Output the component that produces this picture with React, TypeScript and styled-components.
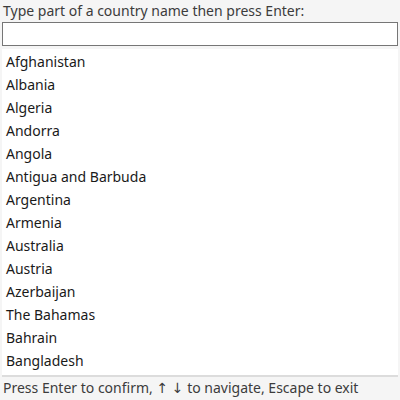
import React from "react";
import styled, { createGlobalStyle } from "styled-components";

const Global = createGlobalStyle`
  html, body { margin: 0; padding: 0; background: #f5f5f5; }
  body { font-family: "Noto Sans", "DejaVu Sans", sans-serif; }
`;

const Page = styled.div`
  width: 400px;
  height: 400px;
  display: flex;
  flex-direction: column;
  background: #f5f5f5;
  overflow: hidden;
`;

const Prompt = styled.div`
  height: 22px;
  padding-left: 3px;
  font-size: 14px;
  line-height: 22px;
  color: #3c3c3c;
  white-space: nowrap;
`;

const Input = styled.input`
  box-sizing: border-box;
  margin: 0 2px;
  height: 24px;
  width: 396px;
  border: 1px solid #767676;
  background: #ffffff;
  outline: none;
  padding: 0 4px;
  font: inherit;
  font-size: 14px;
`;

const List = styled.ul`
  list-style: none;
  margin: 3px 2px 0;
  padding: 1px 0 0;
  height: 328px;
  flex-shrink: 0;
  box-sizing: border-box;
  background: #ffffff;
  border-bottom: 2px solid #dcdcdc;
  overflow: hidden;
`;

const Item = styled.li`
  height: 23px;
  line-height: 23px;
  padding-left: 4px;
  font-size: 14px;
  color: #1a1a1a;
  white-space: nowrap;
`;

const Footer = styled.div`
  padding-left: 3px;
  font-size: 14px;
  line-height: 22px;
  color: #3c3c3c;
  white-space: nowrap;
`;

const countries = [
  "Afghanistan",
  "Albania",
  "Algeria",
  "Andorra",
  "Angola",
  "Antigua and Barbuda",
  "Argentina",
  "Armenia",
  "Australia",
  "Austria",
  "Azerbaijan",
  "The Bahamas",
  "Bahrain",
  "Bangladesh",
];

export default function App() {
  return (
    <Page>
      <Global />
      <Prompt>Type part of a country name then press Enter:</Prompt>
      <Input type="text" />
      <List>
        {countries.map((c) => (
          <Item key={c}>{c}</Item>
        ))}
      </List>
      <Footer>Press Enter to confirm, ↑ ↓ to navigate, Escape to exit</Footer>
    </Page>
  );
}
